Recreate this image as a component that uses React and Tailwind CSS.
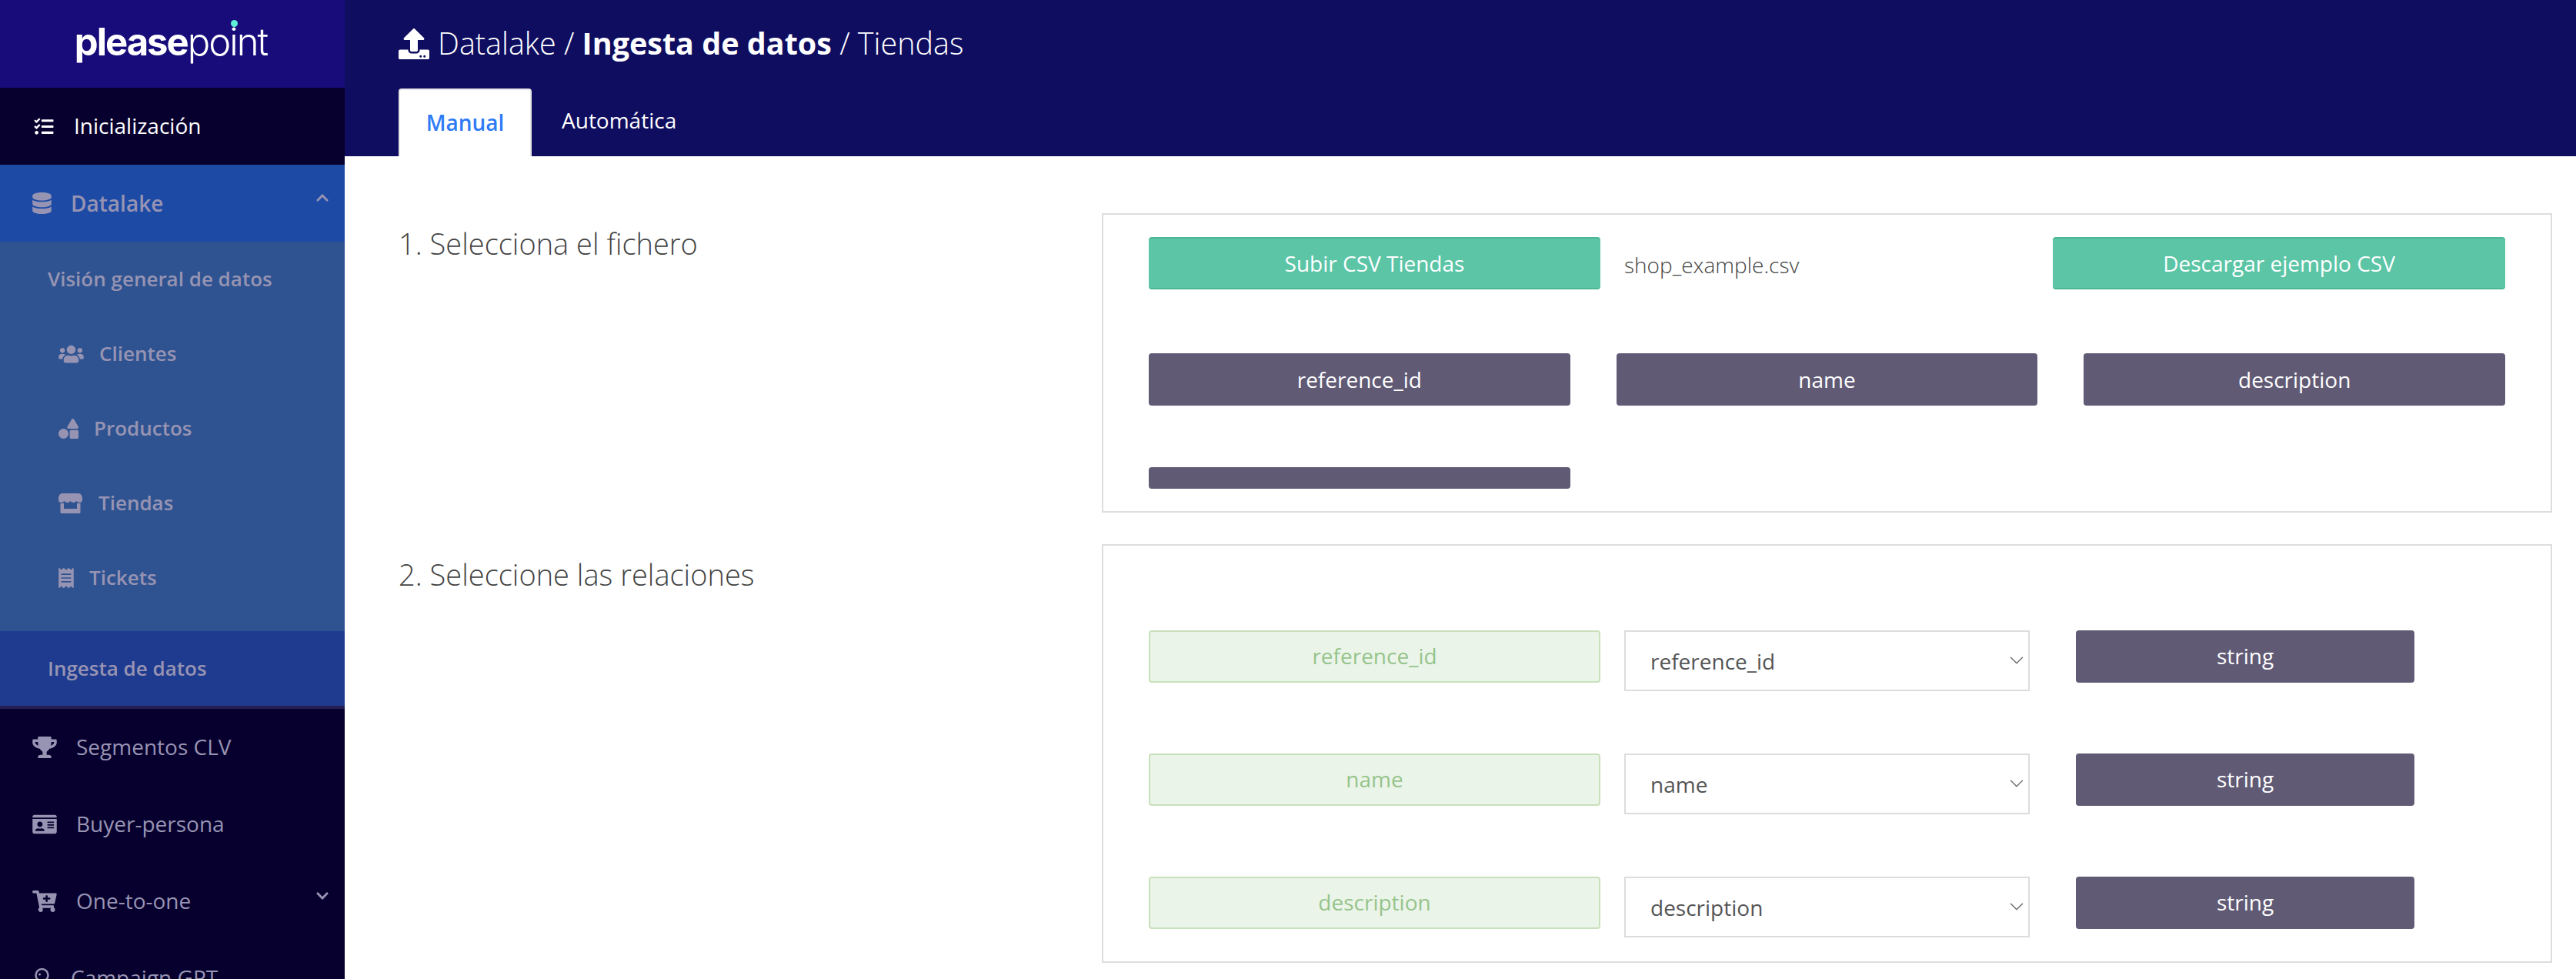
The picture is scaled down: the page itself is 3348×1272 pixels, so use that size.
import { ChevronDown } from 'lucide-react';
import {
  FaCartPlus,
  FaChevronDown,
  FaChevronUp,
  FaDatabase,
  FaIdCard,
  FaReceipt,
  FaShapes,
  FaTasks,
  FaTrophy,
  FaUpload,
  FaUsers,
} from 'react-icons/fa';

const StoreIcon = ({ className }) => (
  <svg viewBox="0 0 31 26" fill="currentColor" className={className}>
    <path d="M5 0H26C29 0 31 3 31 7V8C31 10 30 12 27.7 12C26 12 24.5 11 23.3 10C22 11.5 20.5 12 19.4 12C18 12 16.5 11 15.5 10C14.5 11 13 12 11.6 12C10.5 12 9 11.5 7.7 10C6.5 11 5 12 3.3 12C1 12 0 10 0 8V7C0 3 2 0 5 0Z" />
    <path d="M2.5 13H7V20H24V13H28.5V24.5Q28.5 26 27 26H4Q2.5 26 2.5 24.5Z" />
  </svg>
);

const GptIcon = ({ className }) => (
  <svg viewBox="0 0 19 28" fill="none" stroke="currentColor" strokeWidth="2.5" className={className}>
    <circle cx="9.5" cy="10" r="8" />
    <circle cx="6.5" cy="9" r="1.5" fill="currentColor" stroke="none" />
    <path d="M5 20L4 27H15L14 20" />
  </svg>
);

const subItems = [
  { label: 'Clientes', icon: FaUsers, iconClass: 'w-[33px] h-[26px]', gap: 'ml-[20px]' },
  { label: 'Productos', icon: FaShapes, iconClass: 'w-[26px] h-[26px]', gap: 'ml-[20px]' },
  { label: 'Tiendas', icon: StoreIcon, iconClass: 'w-[31px] h-[26px]', gap: 'ml-[21px]' },
  { label: 'Tickets', icon: FaReceipt, iconClass: 'w-[20px] h-[26px]', gap: 'ml-[20px]' },
];

const bottomItems = [
  { label: 'Segmentos CLV', icon: FaTrophy },
  { label: 'Buyer-persona', icon: FaIdCard },
  { label: 'One-to-one', icon: FaCartPlus, chevron: true },
];

const columns = ['reference_id', 'name', 'description'];

const Sidebar = () => (
  <aside className="w-[448px] shrink-0 h-full overflow-hidden bg-[#07002e] font-['Open_Sans',sans-serif] text-[28px]">
    <div className="h-[114px] bg-[#170c7a] flex items-center justify-center pr-[4px]">
      <div className="font-['Inter',sans-serif] text-[49px] tracking-[-2px] text-white leading-none pb-[6px]">
        <span className="font-bold">please</span>
        <span className="font-light">po</span>
        <span className="relative font-light">
          i
          <span className="absolute left-[2px] top-[1px] w-[9px] h-[9px] rounded-full bg-[#5ff0d8]" />
        </span>
        <span className="font-light">nt</span>
      </div>
    </div>

    <div className="h-[100px] flex items-center pl-[43px] text-white">
      <FaTasks className="w-[28px] h-[25px]" />
      <span className="ml-[25px] mb-[2px]">Inicialización</span>
    </div>

    <div className="h-[100px] bg-[#1d4aa5] flex items-center pl-[42px] pr-[20px] text-[#9794b3] font-semibold">
      <FaDatabase className="w-[25px] h-[28px]" />
      <span className="ml-[25px]">Datalake</span>
      <FaChevronUp className="ml-auto mb-[14px] w-[18px] h-[18px]" />
    </div>

    <div className="bg-[#2f5391] text-[#9794b3] font-semibold text-[26px]">
      <div className="h-[97px] flex items-center pl-[62px]">Visión general de datos</div>
      {subItems.map((item) => {
        const Icon = item.icon;
        return (
          <div key={item.label} className="h-[97px] flex items-center pl-[76px]">
            <Icon className={item.iconClass} />
            <span className={item.gap}>{item.label}</span>
          </div>
        );
      })}
      <div className="h-[21px]" />
    </div>

    <div className="h-[97px] bg-[#1f3b8f] flex items-center pl-[62px] text-[#9794b3] font-semibold text-[26px]">
      Ingesta de datos
    </div>
    <div className="h-[4px] bg-[#231f52]" />

    <div className="text-[#9794b3]">
      {bottomItems.map((item) => {
        const Icon = item.icon;
        return (
          <div key={item.label} className="h-[100px] flex items-center pl-[42px] pr-[20px]">
            <Icon className="w-[32px] h-[28px]" />
            <span className="ml-[25px] mb-[2px]">{item.label}</span>
            {item.chevron && <FaChevronDown className="ml-auto mb-[14px] w-[18px] h-[18px]" />}
          </div>
        );
      })}
      <div className="h-[100px] flex items-center pl-[45px]">
        <GptIcon className="w-[19px] h-[28px]" />
        <span className="ml-[28px] mb-[2px]">Campaign GPT</span>
      </div>
    </div>
  </aside>
);

const Header = () => (
  <header className="h-[203px] bg-[#0f0d60] pl-[70px] text-white flex flex-col">
    <div className="h-[115px] flex items-center pb-[2px]">
      <FaUpload className="w-[40px] h-[40px]" />
      <h1 className="ml-[11px] text-[39.5px] font-light">
        Datalake / <span className="font-bold">Ingesta de datos</span> / Tiendas
      </h1>
    </div>
    <div className="flex h-[88px]">
      <div className="w-[173px] bg-white rounded-t-[4px] border-x-2 border-t-2 border-[#e8e8e8] flex items-center justify-center pb-[2px] text-[#2f7bf5] font-semibold text-[28px]">
        Manual
      </div>
      <div className="ml-[39px] h-[82px] flex items-center text-[28px] font-medium">Automática</div>
    </div>
  </header>
);

const Section = ({ title, className, children }) => (
  <section className="flex">
    <h2 className="w-[914px] shrink-0 pt-[14px] text-[38px] font-light text-[#444] leading-[50px]">{title}</h2>
    <div className={`w-[1885px] border-2 border-[#dddddd] px-[59px] ${className}`}>{children}</div>
  </section>
);

const FileBox = () => (
  <>
    <div className="flex items-start">
      <button className="w-[587px] h-[68px] rounded-[4px] bg-[#5bc5a6] border-y-2 border-[#4cb795] text-white text-[28px]">
        Subir CSV Tiendas
      </button>
      <span className="ml-[31px] mt-[15px] text-[28px] font-light text-[#444]">shop_example.csv</span>
      <button className="ml-auto w-[588px] h-[68px] rounded-[4px] bg-[#5bc5a6] border-y-2 border-[#4cb795] text-white text-[28px]">
        Descargar ejemplo CSV
      </button>
    </div>
    <div className="mt-[83px] grid grid-cols-3 gap-x-[60px]">
      {columns.map((name) => (
        <div key={name} className="h-[68px] rounded-[4px] bg-[#605a75] flex items-center justify-center text-white text-[28px]">
          {name}
        </div>
      ))}
      <div className="mt-[80px] h-[28px] rounded-[4px] bg-[#605a75]" />
    </div>
  </>
);

const RelationRow = ({ name }) => (
  <div className="flex items-start">
    <div className="w-[587px] h-[68px] rounded-[4px] bg-[#ebf4e8] border-2 border-[#c8e0bb] flex items-center justify-center pb-[2px] text-[#96c48c] text-[28px]">
      {name}
    </div>
    <div className="relative ml-[31px] w-[527px] h-[79px]">
      <select
        defaultValue={name}
        className="w-full h-full appearance-none bg-white border-2 border-[#dddddd] pl-[32px] text-[28px] text-[#555] outline-none"
      >
        {columns.map((c) => (
          <option key={c} value={c}>{c}</option>
        ))}
      </select>
      <ChevronDown className="absolute right-[2px] top-[24px] w-[30px] h-[30px] text-[#666] pointer-events-none" strokeWidth={1} />
    </div>
    <div className="ml-[60px] w-[440px] h-[68px] rounded-[4px] bg-[#605a75] flex items-center justify-center pb-[2px] text-white text-[28px]">
      string
    </div>
  </div>
);

export default function App() {
  return (
    <div className="w-screen h-screen overflow-hidden flex bg-white font-['Open_Sans',sans-serif]">
      <Sidebar />
      <main className="flex-1 min-w-0">
        <Header />
        <div className="pl-[70px] pt-[74px] flex flex-col gap-[41px]">
          <Section title="1. Selecciona el fichero" className="pt-[29px] pb-[29px]">
            <FileBox />
          </Section>
          <Section title="2. Seleccione las relaciones" className="pt-[110px] pb-[31px]">
            <div className="flex flex-col gap-[81px]">
              {columns.map((name) => (
                <RelationRow key={name} name={name} />
              ))}
            </div>
          </Section>
        </div>
      </main>
    </div>
  );
}
